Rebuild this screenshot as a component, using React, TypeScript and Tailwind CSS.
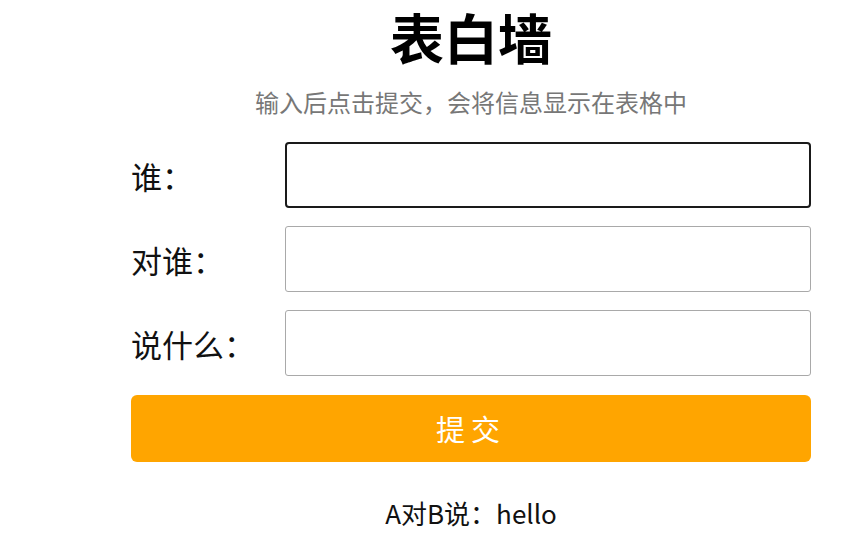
import { useState } from "react";

const font = "font-['Noto_Sans_CJK_SC','Noto_Sans',sans-serif]";

const fields = [
  { key: "from", label: "谁：" },
  { key: "to", label: "对谁：" },
  { key: "msg", label: "说什么：" },
] as const;

export default function App() {
  const [values, setValues] = useState({ from: "", to: "", msg: "" });
  const [messages, setMessages] = useState([{ from: "A", to: "B", msg: "hello" }]);

  const submit = () => {
    if (!values.from || !values.to || !values.msg) return;
    setMessages((m) => [...m, values]);
    setValues({ from: "", to: "", msg: "" });
  };

  return (
    <div className={`h-[536px] w-[854px] overflow-hidden bg-white ${font}`}>
      <div className="ml-[131px] flex w-[680px] flex-col items-center">
        <h1 className="text-[54px] font-bold leading-[74px] text-black">表白墙</h1>
        <p className="mt-[12px] text-[24px] leading-[32px] text-[#777]">
          输入后点击提交，会将信息显示在表格中
        </p>

        <div className="mt-[24px] flex w-full flex-col gap-[18px]">
          {fields.map((f, i) => (
            <div key={f.key} className="flex items-center">
              <label className="w-[154px] text-[31px] leading-none text-[#111]">{f.label}</label>
              <input
                type="text"
                autoFocus={i === 0}
                value={values[f.key]}
                onChange={(e) => setValues((v) => ({ ...v, [f.key]: e.target.value }))}
                className={
                  i === 0
                    ? "h-[66px] flex-1 rounded-[4px] border-2 border-[#1a1a1a] px-3 text-[24px] outline-none"
                    : "h-[66px] flex-1 rounded-[3px] border border-[#a9a9a9] px-3 text-[24px] outline-none"
                }
              />
            </div>
          ))}
          <button
            type="button"
            onClick={submit}
            className="mt-[1px] h-[67px] w-full rounded-[6px] bg-[#ffa500] text-[29px] tracking-[6px] text-white"
          >
            提交
          </button>
        </div>

        <div className="mt-[34px] flex flex-col items-center">
          {messages.map((m, i) => (
            <p key={i} className="text-[26px] leading-[34px] text-[#111]">
              {m.from}对{m.to}说：{m.msg}
            </p>
          ))}
        </div>
      </div>
    </div>
  );
}
